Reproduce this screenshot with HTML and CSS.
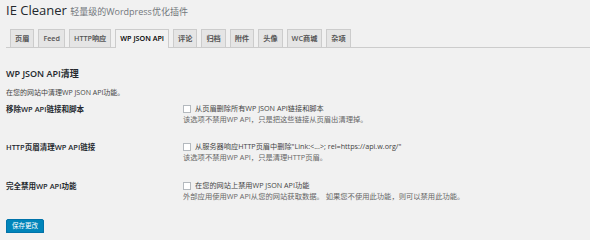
FILE: index.html
```html
<!DOCTYPE html>
<html lang="zh-CN">
  <head>
    <meta charset="UTF-8" />
    <title>IE Cleaner</title>
    <link rel="stylesheet" href="styles.css">
  </head>
  <body>
    <div class="wrap">
      <h1>IE Cleaner <span class="subtitle">轻量级的Wordpress优化插件</span></h1>

      <div class="nav-tabs">
        <a class="nav-tab">页眉</a>
        <a class="nav-tab">Feed</a>
        <a class="nav-tab">HTTP响应</a>
        <a class="nav-tab nav-tab-active">WP JSON API</a>
        <a class="nav-tab">评论</a>
        <a class="nav-tab">归档</a>
        <a class="nav-tab">附件</a>
        <a class="nav-tab">头像</a>
        <a class="nav-tab">WC商城</a>
        <a class="nav-tab">杂项</a>
      </div>

      <h2>WP JSON API清理</h2>
      <p class="intro">在您的网站中清理WP JSON API功能。</p>

      <div class="form-table">
        <div class="row">
          <div class="label">移除WP API链接和脚本</div>
          <div class="field">
            <label class="check"><input type="checkbox" />从页眉删除所有WP JSON API链接和脚本</label>
            <p class="description">该选项不禁用WP API，只是把这些链接从页眉出清理掉。</p>
          </div>
        </div>
        <div class="row">
          <div class="label">HTTP页眉清理WP API链接</div>
          <div class="field">
            <label class="check"><input type="checkbox" />从服务器响应HTTP页眉中删除"Link:&lt;...&gt;; rel=https://api.w.org/"</label>
            <p class="description">该选项不禁用WP API，只是清理HTTP页眉。</p>
          </div>
        </div>
        <div class="row">
          <div class="label">完全禁用WP API功能</div>
          <div class="field">
            <label class="check"><input type="checkbox" />在您的网站上禁用WP JSON API功能</label>
            <p class="description">外部应用使用WP API从您的网站获取数据。 如果您不使用此功能，则可以禁用此功能。</p>
          </div>
        </div>
      </div>

      <button class="button-primary">保存更改</button>
    </div>
  </body>
</html>
```

FILE: styles.css
```css
body {
  margin: 0;
  background-color: #f1f1f1;
  font-family: "Open Sans", "Noto Sans CJK SC", sans-serif;
  color: #444;
}

.wrap {
  padding: 2px 0 0 6px;
}

h1 {
  margin: 0;
  font-size: 13px;
  line-height: 16px;
  font-weight: 400;
  color: #23282d;
}

.subtitle {
  font-size: 9px;
  color: #72777c;
}

.nav-tabs {
  display: flex;
  margin-top: 9px;
  padding-left: 4px;
  border-bottom: 1px solid #ccc;
  height: 18px;
}

.nav-tab {
  display: block;
  margin-right: 4px;
  padding: 0 4px;
  height: 17px;
  line-height: 17px;
  font-size: 7.2px;
  font-weight: 600;
  color: #555;
  background-color: #e5e5e5;
  border: 1px solid #ccc;
  border-bottom: none;
}

.nav-tab-active {
  background-color: #f1f1f1;
  color: #000;
  height: 18px;
}

h2 {
  margin: 20px 0 0;
  font-size: 9px;
  line-height: 12px;
  font-weight: 600;
  color: #23282d;
}

.intro {
  margin: 8px 0 0;
  font-size: 7px;
  line-height: 10px;
  color: #444;
}

.row {
  display: flex;
  padding: 5px 0 11px;
}

.row:last-child {
  padding-top: 6px;
}

.label {
  width: 177px;
  padding-top: 1px;
  font-size: 7.5px;
  line-height: 11px;
  font-weight: 600;
  color: #23282d;
}

.check {
  display: flex;
  align-items: center;
  font-size: 7.2px;
  line-height: 11px;
  color: #444;
}

.check input {
  appearance: none;
  width: 8px;
  height: 8px;
  margin: 0 4px 0 0;
  border: 1px solid #b4b9be;
  background-color: #fff;
  box-sizing: border-box;
}

.description {
  margin: 0;
  font-size: 7.3px;
  line-height: 11px;
  color: #666;
}

.button-primary {
  display: block;
  margin-top: 6px;
  height: 14px;
  padding: 0 5px;
  font-family: inherit;
  font-size: 6.5px;
  line-height: 12px;
  color: #fff;
  background-color: #0085ba;
  border: 1px solid #0073aa;
  border-radius: 2px;
  box-shadow: 0 1px 0 #006799;
}
```
